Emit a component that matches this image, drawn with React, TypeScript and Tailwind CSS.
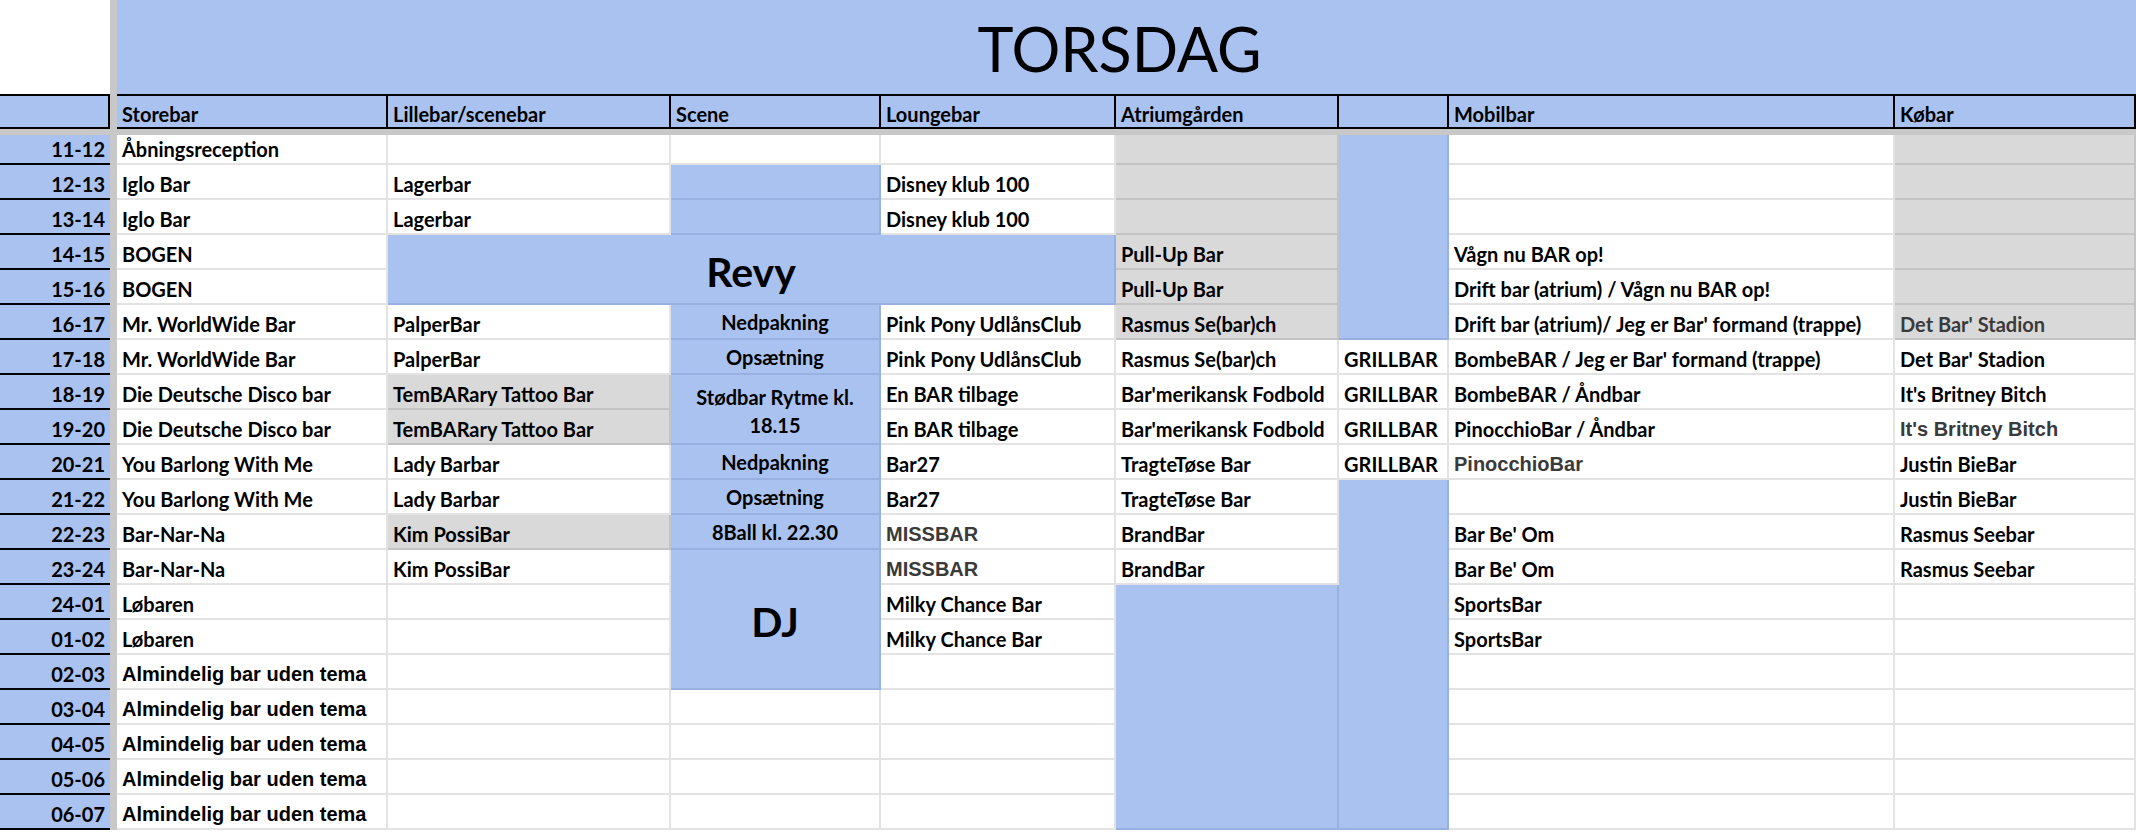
import React from "react";

type Kind = "w" | "g" | "b";

interface Seg {
	t?: string;
	n?: number;
	k?: Kind;
	helv?: boolean;
	dim?: boolean;
	mid?: boolean;
	big?: boolean;
	wrap?: boolean;
	skip?: number;
}

interface Column {
	col: string;
	segs: Seg[];
}

// literal class names so tailwind picks them up
const ROW_START = [
	"row-start-4", "row-start-5", "row-start-6", "row-start-7", "row-start-8",
	"row-start-9", "row-start-10", "row-start-11", "row-start-12", "row-start-13",
	"row-start-14", "row-start-15", "row-start-16", "row-start-17", "row-start-18",
	"row-start-19", "row-start-20", "row-start-21", "row-start-22", "row-start-23",
];

const ROW_SPAN = [
	"", "row-span-1", "row-span-2", "row-span-3", "row-span-4", "row-span-5",
	"row-span-6", "row-span-7", "row-span-8", "row-span-9", "row-span-10",
];

const KIND: Record<Kind, string> = {
	w: "bg-white border-[#e3e3e3]",
	g: "bg-[#d9d9d9] border-[#c3c3c3]",
	b: "bg-[#aac2ef] border-[#98b1e1]",
};

const CAL = "font-[Lato,'Open_Sans',sans-serif] text-[20px]";
const HELV = "font-['Liberation_Sans',Arial,sans-serif] text-[20px]";

const rep = (seg: Seg, count: number): Seg[] => Array.from({ length: count }, () => seg);

const TIMES = [
	"11-12", "12-13", "13-14", "14-15", "15-16", "16-17", "17-18", "18-19", "19-20", "20-21",
	"21-22", "22-23", "23-24", "24-01", "01-02", "02-03", "03-04", "04-05", "05-06", "06-07",
];

const HEADERS = [
	{ col: "col-start-3", t: "Storebar" },
	{ col: "col-start-4", t: "Lillebar/scenebar" },
	{ col: "col-start-5", t: "Scene" },
	{ col: "col-start-6", t: "Loungebar" },
	{ col: "col-start-7", t: "Atriumgården" },
	{ col: "col-start-8", t: "" },
	{ col: "col-start-9", t: "Mobilbar" },
	{ col: "col-start-10", t: "Købar" },
];

const COLUMNS: Column[] = [
	{
		col: "col-start-3",
		segs: [
			{ t: "Åbningsreception" },
			...rep({ t: "Iglo Bar" }, 2),
			...rep({ t: "BOGEN" }, 2),
			...rep({ t: "Mr. WorldWide Bar" }, 2),
			...rep({ t: "Die Deutsche Disco bar" }, 2),
			...rep({ t: "You Barlong With Me" }, 2),
			...rep({ t: "Bar-Nar-Na" }, 2),
			...rep({ t: "Løbaren" }, 2),
			...rep({ t: "Almindelig bar uden tema", helv: true }, 5),
		],
	},
	{
		col: "col-start-4",
		segs: [
			{},
			...rep({ t: "Lagerbar" }, 2),
			{ skip: 2 },
			...rep({ t: "PalperBar" }, 2),
			...rep({ t: "TemBARary Tattoo Bar", k: "g" }, 2),
			...rep({ t: "Lady Barbar" }, 2),
			{ t: "Kim PossiBar", k: "g" },
			{ t: "Kim PossiBar" },
			...rep({}, 7),
		],
	},
	{
		col: "col-start-5",
		segs: [
			{},
			...rep({ k: "b" }, 2),
			{ skip: 2 },
			{ t: "Nedpakning", k: "b", mid: true },
			{ t: "Opsætning", k: "b", mid: true },
			{ t: "Stødbar Rytme kl. 18.15", k: "b", mid: true, wrap: true, n: 2 },
			{ t: "Nedpakning", k: "b", mid: true },
			{ t: "Opsætning", k: "b", mid: true },
			{ t: "8Ball kl. 22.30", k: "b", mid: true },
			{ t: "DJ", k: "b", mid: true, big: true, n: 4 },
			...rep({}, 4),
		],
	},
	{
		col: "col-start-6",
		segs: [
			{},
			...rep({ t: "Disney klub 100" }, 2),
			{ skip: 2 },
			...rep({ t: "Pink Pony UdlånsClub" }, 2),
			...rep({ t: "En BAR tilbage" }, 2),
			...rep({ t: "Bar27" }, 2),
			...rep({ t: "MISSBAR", helv: true, dim: true }, 2),
			...rep({ t: "Milky Chance Bar" }, 2),
			...rep({}, 5),
		],
	},
	{
		col: "col-start-7",
		segs: [
			...rep({ k: "g" }, 3),
			...rep({ t: "Pull-Up Bar", k: "g" }, 2),
			{ t: "Rasmus Se(bar)ch", k: "g" },
			{ t: "Rasmus Se(bar)ch" },
			...rep({ t: "Bar'merikansk Fodbold" }, 2),
			...rep({ t: "TragteTøse Bar" }, 2),
			...rep({ t: "BrandBar" }, 2),
			{ k: "b", n: 7 },
		],
	},
	{
		col: "col-start-8",
		segs: [
			{ k: "b", n: 6 },
			...rep({ t: "GRILLBAR" }, 4),
			{ k: "b", n: 10 },
		],
	},
	{
		col: "col-start-9",
		segs: [
			...rep({}, 3),
			{ t: "Vågn nu BAR op!" },
			{ t: "Drift bar (atrium) / Vågn nu BAR op!" },
			{ t: "Drift bar (atrium)/ Jeg er Bar' formand (trappe)" },
			{ t: "BombeBAR / Jeg er Bar' formand (trappe)" },
			{ t: "BombeBAR / Åndbar" },
			{ t: "PinocchioBar / Åndbar" },
			{ t: "PinocchioBar", helv: true, dim: true },
			{},
			...rep({ t: "Bar Be' Om" }, 2),
			...rep({ t: "SportsBar" }, 2),
			...rep({}, 5),
		],
	},
	{
		col: "col-start-10",
		segs: [
			...rep({ k: "g" }, 5),
			{ t: "Det Bar' Stadion", k: "g", dim: true },
			{ t: "Det Bar' Stadion" },
			{ t: "It's Britney Bitch" },
			{ t: "It's Britney Bitch", helv: true, dim: true },
			...rep({ t: "Justin BieBar" }, 2),
			...rep({ t: "Rasmus Seebar" }, 2),
			...rep({}, 7),
		],
	},
];

function Cell({ seg, place }: { seg: Seg; place: string }) {
	const kind = KIND[seg.k ?? "w"];
	const font = seg.helv ? HELV : CAL;
	const align = seg.mid
		? "items-center justify-center text-center"
		: "items-end pb-[2px] pl-[5px]";
	const size = seg.big
		? "text-[41px] leading-none pt-[5px]"
		: seg.wrap
			? "whitespace-normal leading-[28px] px-2 pt-[3px]"
			: "whitespace-nowrap leading-6";

	return (
		<div
			className={`${place} flex min-w-0 overflow-hidden border-r-2 border-b-2 font-bold ${kind} ${font} ${align} ${size} ${seg.dim ? "text-[#3a3a3a]" : "text-black"}`}
		>
			{seg.t}
		</div>
	);
}

export default function App() {
	const cells: React.ReactNode[] = [];

	COLUMNS.forEach((column) => {
		let row = 0;
		column.segs.forEach((seg, i) => {
			if (seg.skip) {
				row += seg.skip;
				return;
			}
			const span = seg.n ?? 1;
			cells.push(
				<Cell
					key={`${column.col}-${i}`}
					seg={seg}
					place={`${column.col} ${ROW_START[row]} ${ROW_SPAN[span]}`}
				/>,
			);
			row += span;
		});
	});

	return (
		<div className="w-[2136px] h-[832px] overflow-hidden bg-white">
			<div className="grid grid-cols-[110px_7px_271px_283px_210px_235px_223px_110px_446px_1fr] grid-rows-[94px_35px_6px_30px_repeat(19,35px)]">
				{/* corner + title */}
				<div className="col-start-1 row-start-1 bg-white" />
				<div className="col-start-2 row-span-full bg-[#c8c8c8]" />
				<div className="col-start-3 col-span-8 row-start-1 flex items-center justify-center pt-[3px] pr-[14px] bg-[#aac2ef] font-[Lato,'Open_Sans',sans-serif] text-[61px] leading-none text-black">
					TORSDAG
				</div>

				{/* header row */}
				<div className="col-start-1 row-start-2 bg-[#aac2ef] border-t-2 border-b-2 border-r-2 border-black" />
				{HEADERS.map((h) => (
					<div
						key={h.col}
						className={`${h.col} row-start-2 flex items-end pb-[1px] pl-[5px] bg-[#aac2ef] border-t-2 border-b-2 border-r-2 border-black ${CAL} font-bold leading-6 whitespace-nowrap text-black`}
					>
						{h.t}
					</div>
				))}

				{/* frozen pane separator */}
				<div className="col-span-full row-start-3 bg-[#c8c8c8]" />

				{/* time labels */}
				{TIMES.map((t, i) => (
					<div
						key={t}
						className={`col-start-1 ${ROW_START[i]} flex items-end justify-end pb-[2px] pr-[5px] bg-[#aac2ef] border-b-2 border-black ${CAL} font-bold leading-6 text-black`}
					>
						{t}
					</div>
				))}

				{cells}

				{/* merged Revy block */}
				<div className="col-start-4 col-span-3 row-start-7 row-span-2 flex items-center justify-center pt-[5px] bg-[#aac2ef] border-r-2 border-b-2 border-[#98b1e1] font-[Lato,'Open_Sans',sans-serif] font-bold text-[41px] leading-none text-black">
					Revy
				</div>
			</div>
		</div>
	);
}
